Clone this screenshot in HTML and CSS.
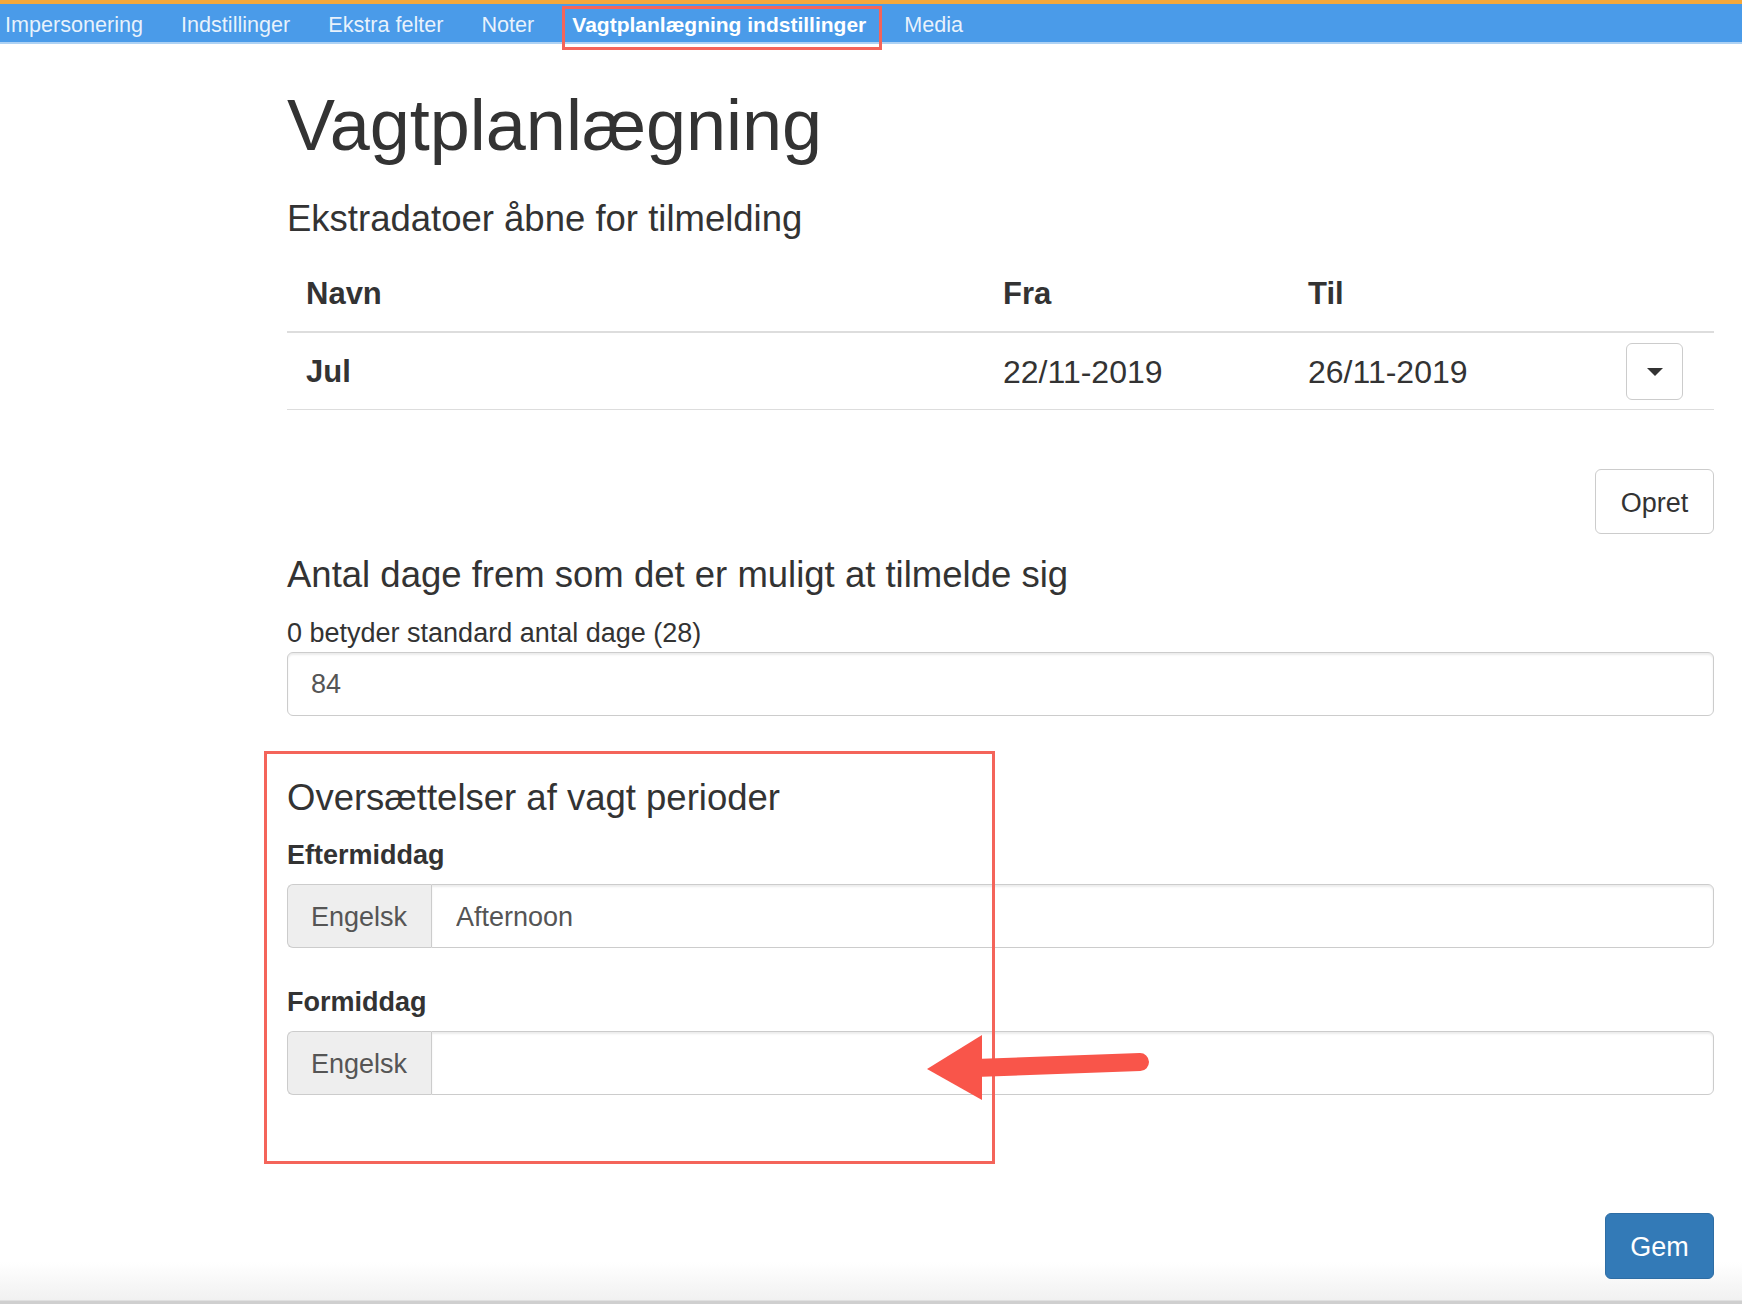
FILE: index.html
```html
<!DOCTYPE html>
<html lang="da">
<head>
<meta charset="utf-8">
<title>Vagtplanlægning</title>
<link rel="stylesheet" href="styles.css">
</head>
<body>
<nav class="topnav">
  <a class="nav-item">Impersonering</a>
  <a class="nav-item">Indstillinger</a>
  <a class="nav-item">Ekstra felter</a>
  <a class="nav-item">Noter</a>
  <a class="nav-item active">Vagtplanlægning indstillinger</a>
  <a class="nav-item">Media</a>
</nav>
<main class="page">
  <h1 class="title">Vagtplanlægning</h1>
  <h2 class="section-title first">Ekstradatoer åbne for tilmelding</h2>
  <table class="dates">
    <colgroup>
      <col class="c-name"><col class="c-from"><col class="c-to"><col class="c-act">
    </colgroup>
    <thead>
      <tr><th>Navn</th><th>Fra</th><th>Til</th><th></th></tr>
    </thead>
    <tbody>
      <tr>
        <td class="name">Jul</td>
        <td class="date">22/11-2019</td>
        <td class="date">26/11-2019</td>
        <td class="act"><button class="btn-drop" type="button"><span class="caret"></span></button></td>
      </tr>
    </tbody>
  </table>
  <div class="actions create"><button class="btn" type="button">Opret</button></div>

  <h2 class="section-title days">Antal dage frem som det er muligt at tilmelde sig</h2>
  <label class="help">0 betyder standard antal dage (28)</label>
  <input class="field" type="text" value="84">

  <section class="translations">
    <h2 class="section-title">Oversættelser af vagt perioder</h2>
    <label class="field-label l1">Eftermiddag</label>
    <div class="input-group">
      <span class="addon">Engelsk</span>
      <input class="field grouped" type="text" value="Afternoon">
    </div>
    <label class="field-label l2">Formiddag</label>
    <div class="input-group">
      <span class="addon">Engelsk</span>
      <input class="field grouped" type="text" value="">
    </div>
  </section>

  <div class="actions save"><button class="btn btn-primary" type="button">Gem</button></div>
</main>

<div class="annot annot-nav"></div>
<div class="annot annot-section"></div>
<svg class="arrow" width="240" height="80" viewBox="0 0 240 80" aria-hidden="true">
  <line x1="55" y1="38" x2="220" y2="32" stroke="#f9554a" stroke-width="18" stroke-linecap="round"/>
  <polygon points="7,39 62,5 62,70" fill="#f9554a"/>
</svg>
</body>
</html>
```
FILE: styles.css
```css
html, body {
  margin: 0;
  padding: 0;
}
body {
  position: relative;
  min-height: 1304px;
  font-family: "Liberation Sans", Arial, Helvetica, sans-serif;
  color: #333;
  background-color: #fff;
  background-image: linear-gradient(to bottom, #fff 0, #fff 1262px, #f1f1f1 1300px, #cfcfcf 1301px, #cfcfcf 1304px);
  background-size: 100% 1304px;
  background-repeat: no-repeat;
}

/* top navigation */
.topnav {
  display: flex;
  align-items: center;
  gap: 38px;
  height: 38px;
  padding-left: 5px;
  background: #4a9be9;
  border-top: 4px solid #f6a83a;
  border-bottom: 2px solid #aed2f4;
}
.nav-item {
  font-size: 21.6px;
  line-height: 34px;
  padding-top: 4px;
  color: rgba(255, 255, 255, 0.88);
  white-space: nowrap;
}
.nav-item.active {
  color: #fff;
  font-weight: bold;
  font-size: 21px;
}

/* page */
.page {
  padding: 0 28px 0 287px;
}
.title {
  margin: 42px 0 0;
  font-size: 72px;
  line-height: 79px;
  font-weight: normal;
  color: #333;
}
.section-title {
  margin: 0;
  font-size: 36.5px;
  line-height: 40px;
  font-weight: normal;
  color: #333;
}
.section-title.first {
  margin-top: 34px;
}
.section-title.days {
  margin-top: 21px;
}

/* table */
.dates {
  width: 100%;
  margin-top: 18px;
  border-collapse: separate;
  border-spacing: 0;
  table-layout: fixed;
  font-size: 31px;
  line-height: 40px;
}
.c-name { width: 697px; }
.c-from { width: 305px; }
.c-to { width: 311px; }
.c-act { width: 114px; }
.dates th {
  text-align: left;
  font-weight: bold;
  padding: 17px 19px;
  border-bottom: 2px solid #ddd;
}
.dates td {
  padding: 10px 19px 9px;
  border-bottom: 1px solid #ddd;
  vertical-align: middle;
}
.dates td.name {
  font-weight: bold;
}
.dates td.date {
  font-size: 32px;
}
.dates td.act {
  padding-right: 31px;
}
.btn-drop {
  display: flex;
  align-items: center;
  justify-content: center;
  margin-left: auto;
  width: 57px;
  height: 57px;
  padding: 0;
  background: #fff;
  border: 1px solid #ccc;
  border-radius: 6px;
}
.caret {
  width: 0;
  height: 0;
  border-top: 8px solid #333;
  border-left: 8px solid transparent;
  border-right: 8px solid transparent;
}

/* buttons */
.actions {
  display: flex;
  justify-content: flex-end;
}
.actions.create {
  margin-top: 59px;
}
.actions.save {
  margin-top: 118px;
}
.btn {
  height: 65px;
  width: 119px;
  padding: 3px 0 0;
  font-family: "Liberation Sans", Arial, Helvetica, sans-serif;
  font-size: 27px;
  color: #333;
  background: #fff;
  border: 1px solid #ccc;
  border-radius: 6px;
}
.btn-primary {
  width: 109px;
  height: 66px;
  color: #fff;
  background: #337ab7;
  border-color: #2e6da4;
}

/* form */
.help {
  display: block;
  margin-top: 19px;
  font-size: 27px;
  line-height: 38px;
}
.field {
  display: block;
  box-sizing: border-box;
  width: 100%;
  height: 64px;
  margin: 0;
  padding: 0 23px;
  font-family: "Liberation Sans", Arial, Helvetica, sans-serif;
  font-size: 27px;
  color: #555;
  background: #fff;
  border: 1px solid #ccc;
  border-radius: 6px;
  box-shadow: inset 0 2px 2px rgba(0, 0, 0, 0.075);
  outline: none;
}
.translations {
  margin-top: 62px;
}
.field-label {
  display: block;
  font-size: 27px;
  line-height: 38px;
  font-weight: bold;
  margin-bottom: 10px;
}
.field-label.l1 {
  margin-top: 18px;
}
.field-label.l2 {
  margin-top: 35px;
}
.input-group {
  display: flex;
  height: 64px;
}
.addon {
  display: flex;
  align-items: center;
  box-sizing: border-box;
  flex: 0 0 144px;
  padding-left: 23px;
  padding-top: 3px;
  font-size: 27px;
  color: #555;
  background: #eee;
  border: 1px solid #ccc;
  border-right: 0;
  border-radius: 6px 0 0 6px;
}
.field.grouped {
  flex: 1;
  width: auto;
  height: 64px;
  padding-left: 24px;
  padding-top: 3px;
  border-radius: 0 6px 6px 0;
}

/* annotations drawn over the screenshot */
.annot {
  position: absolute;
  box-sizing: border-box;
  border: 3px solid #f4645a;
  pointer-events: none;
}
.annot-nav {
  left: 562px;
  top: 6px;
  width: 320px;
  height: 44px;
}
.annot-section {
  left: 264px;
  top: 751px;
  width: 731px;
  height: 413px;
}
.arrow {
  position: absolute;
  left: 920px;
  top: 1030px;
}
```
